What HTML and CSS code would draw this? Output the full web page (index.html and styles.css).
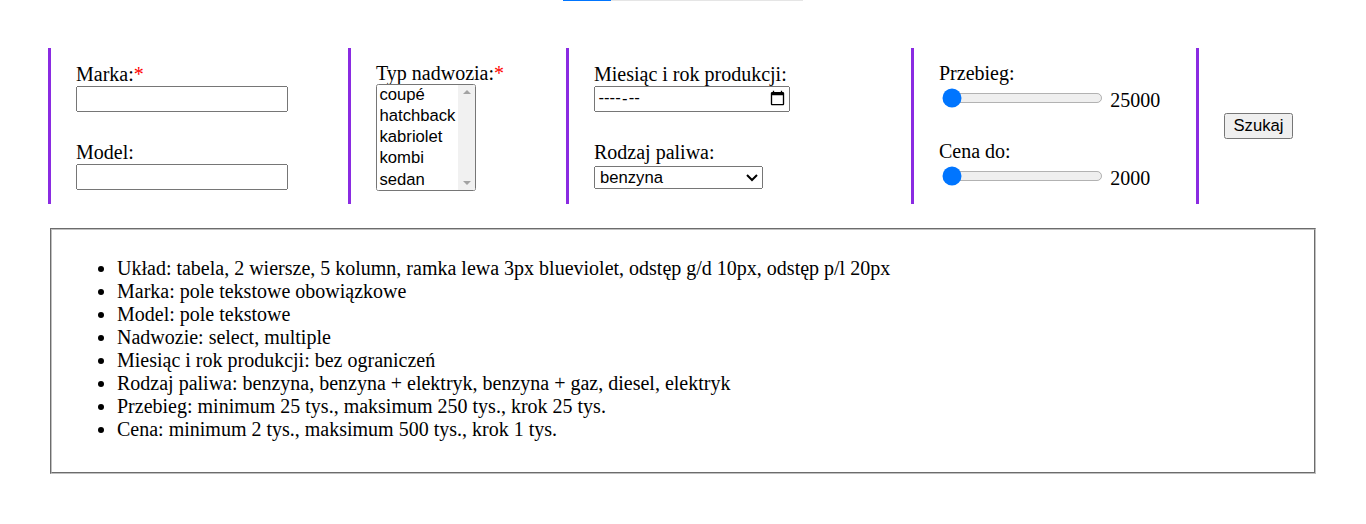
FILE: index.html
```html
<!DOCTYPE html>
<html lang="pl">
<head>
<meta charset="utf-8">
<title>Wyszukiwarka samochodów</title>
<link rel="stylesheet" href="styles.css">
</head>
<body>
<div class="topbar"><div class="topbar-fill"></div></div>
<form class="search">
  <div class="cell">
    <label class="lbl" for="marka">Marka:<span class="req">*</span></label>
    <input class="ctl text" type="text" id="marka" required>
  </div>
  <div class="cell span2">
    <label class="lbl" for="typ">Typ nadwozia:<span class="req">*</span></label>
    <span class="multi-wrap">
      <select class="ctl multi" id="typ" multiple size="5" required>
        <option>coupé</option>
        <option>hatchback</option>
        <option>kabriolet</option>
        <option>kombi</option>
        <option>sedan</option>
      </select>
      <span class="fake-scroll" aria-hidden="true"></span>
    </span>
  </div>
  <div class="cell">
    <label class="lbl" for="data">Miesiąc i rok produkcji:</label>
    <input class="ctl month" type="month" id="data" lang="pl">
  </div>
  <div class="cell">
    <label class="lbl" for="przebieg">Przebieg:</label>
    <div class="slider-row">
      <input class="ctl range" type="range" id="przebieg" min="25000" max="250000" step="25000" value="25000">
      <output class="val" for="przebieg">25000</output>
    </div>
  </div>
  <div class="cell span2">
    <button class="ctl btn" type="submit">Szukaj</button>
  </div>
  <div class="cell">
    <label class="lbl" for="model">Model:</label>
    <input class="ctl text" type="text" id="model">
  </div>
  <div class="cell">
    <label class="lbl" for="paliwo">Rodzaj paliwa:</label>
    <select class="ctl single" id="paliwo">
      <option>benzyna</option>
      <option>benzyna + elektryk</option>
      <option>benzyna + gaz</option>
      <option>diesel</option>
      <option>elektryk</option>
    </select>
  </div>
  <div class="cell">
    <label class="lbl" for="cena">Cena do:</label>
    <div class="slider-row">
      <input class="ctl range" type="range" id="cena" min="2000" max="500000" step="1000" value="2000">
      <output class="val" for="cena">2000</output>
    </div>
  </div>
</form>
<div class="notes">
  <ul>
    <li>Układ: tabela, 2 wiersze, 5 kolumn, ramka lewa 3px blueviolet, odstęp g/d 10px, odstęp p/l 20px</li>
    <li>Marka: pole tekstowe obowiązkowe</li>
    <li>Model: pole tekstowe</li>
    <li>Nadwozie: select, multiple</li>
    <li>Miesiąc i rok produkcji: bez ograniczeń</li>
    <li>Rodzaj paliwa: benzyna, benzyna + elektryk, benzyna + gaz, diesel, elektryk</li>
    <li>Przebieg: minimum 25 tys., maksimum 250 tys., krok 25 tys.</li>
    <li>Cena: minimum 2 tys., maksimum 500 tys., krok 1 tys.</li>
  </ul>
</div>
</body>
</html>
```
FILE: styles.css
```css
html, body {
  margin: 0;
  padding: 0;
  background: #ffffff;
}

body {
  font-family: "Liberation Serif", "Times New Roman", serif;
  font-size: 20px;
  color: #000000;
}

.topbar {
  width: 240px;
  height: 1px;
  margin: 0 auto;
  background: #e5e5e5;
  display: flex;
}

.topbar-fill {
  width: 48px;
  background: #0075ff;
}

.search {
  display: grid;
  grid-template-columns: 300px 218px 345px 285px 122px;
  grid-template-rows: 78px 78px;
  margin: 47px 0 0 48px;
}

.cell {
  border-left: 3px solid blueviolet;
  padding-left: 25px;
  display: flex;
  flex-direction: column;
  justify-content: center;
  align-items: flex-start;
}

.span2 {
  grid-row: span 2;
}

.lbl {
  display: block;
  line-height: 23px;
}

.req {
  color: #ff0000;
}

.ctl {
  zoom: 1.25;
  font-family: "Liberation Sans", Arial, sans-serif;
  font-size: 13.333px;
}

.text {
  box-sizing: border-box;
  width: 169.6px;
  height: 20.8px;
  margin: 0;
}

.month {
  box-sizing: border-box;
  width: 156.8px;
  height: 20.8px;
  margin: 0;
}

.multi-wrap {
  position: relative;
  display: block;
  margin-top: -1px;
}

.multi {
  display: block;
  box-sizing: border-box;
  width: 80px;
  height: 85.6px;
  margin: 0;
}

.fake-scroll {
  position: absolute;
  top: 1px;
  bottom: 1px;
  right: 1px;
  width: 17px;
  background: #f1f1f1;
  border-radius: 0 2px 2px 0;
}

.fake-scroll::before,
.fake-scroll::after {
  content: "";
  position: absolute;
  left: 5px;
  width: 0;
  height: 0;
  border-left: 4px solid transparent;
  border-right: 4px solid transparent;
}

.fake-scroll::before {
  top: 5px;
  border-bottom: 4px solid #a3a3a3;
}

.fake-scroll::after {
  bottom: 5px;
  border-top: 4px solid #a3a3a3;
}

.single {
  box-sizing: border-box;
  width: 135.2px;
  height: 18.4px;
  margin: 1px 0 0 0;
}

.slider-row {
  display: flex;
  align-items: flex-start;
}

.range {
  width: 129px;
  height: 16px;
  margin: 2.4px 2px 0 2px;
}

.val {
  margin: 4px 0 0 5px;
  line-height: 23px;
}

.btn {
  margin: 0;
}

.notes {
  margin: 24px 50px 0 50px;
  border: 2px groove #c0c0c0;
  padding: 7px 25px 11px 25px;
}

.notes ul {
  margin: 20px 0;
  padding-left: 40px;
  line-height: 23px;
}
```
